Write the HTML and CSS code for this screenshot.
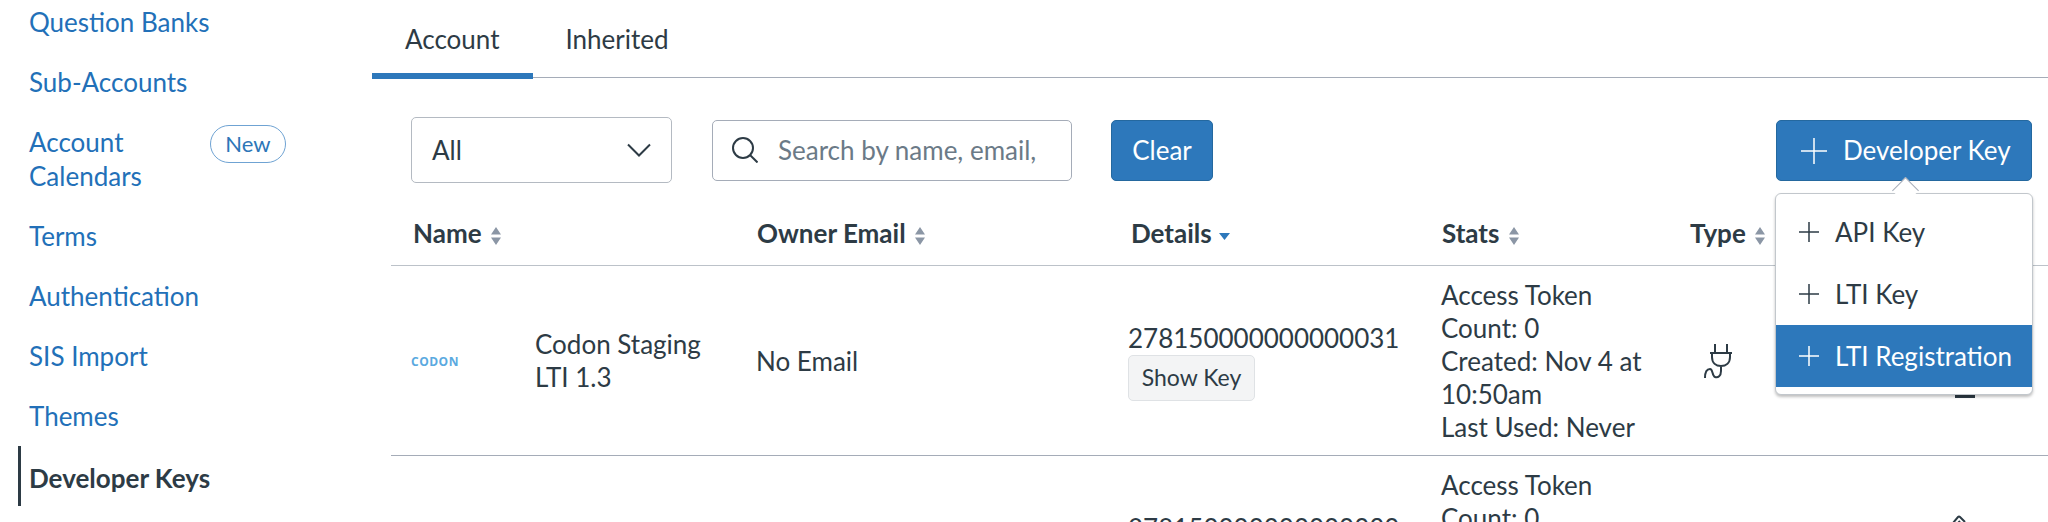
FILE: index.html
```html
<!DOCTYPE html>
<html lang="en">
<head>
    <meta charset="UTF-8">
    <title>Developer Keys</title>
    <link rel="stylesheet" href="styles.css">
</head>
<body>

    <aside class="sidebar">
        <ul class="nav">
            <li><a href="#">Question Banks</a></li>
            <li><a href="#">Sub-Accounts</a></li>
            <li class="nav-badged"><a href="#">Account<br>Calendars</a><span class="badge">New</span></li>
            <li><a href="#">Terms</a></li>
            <li><a href="#">Authentication</a></li>
            <li><a href="#">SIS Import</a></li>
            <li><a href="#">Themes</a></li>
            <li class="active"><a href="#">Developer Keys</a></li>
        </ul>
    </aside>

    <main class="content">
        <div class="tabs">
            <a class="tab tab-active" href="#">Account</a>
            <a class="tab" href="#">Inherited</a>
        </div>

        <div class="toolbar">
            <div class="select">
                <span>All</span>
                <svg class="chevron" viewBox="0 0 24 14"><path d="M1 1.500 12 12.500 23 1.500"/></svg>
            </div>
            <div class="search">
                <svg class="search-icon" viewBox="0 0 26 26"><circle cx="11" cy="11" r="10"/><path d="M18 18 25.500 25.500"/></svg>
                <span class="placeholder">Search by name, email,</span>
            </div>
            <button class="btn btn-clear">Clear</button>
            <div class="add-wrap">
                <button class="btn btn-add">
                    <svg class="plus plus-big" viewBox="0 0 26 26"><path d="M0 13H26M13 0V26"/></svg>
                    Developer Key
                </button>
                <div class="menu">
                    <a class="menu-item" href="#"><svg class="plus" viewBox="0 0 20 20"><path d="M0 10H20M10 0V20"/></svg>API Key</a>
                    <a class="menu-item" href="#"><svg class="plus" viewBox="0 0 20 20"><path d="M0 10H20M10 0V20"/></svg>LTI Key</a>
                    <a class="menu-item menu-item-on" href="#"><svg class="plus" viewBox="0 0 20 20"><path d="M0 10H20M10 0V20"/></svg>LTI Registration</a>
                </div>
            </div>
        </div>

        <table class="keys">
            <colgroup>
                <col class="col-name"><col class="col-email"><col class="col-details"><col class="col-stats"><col class="col-type"><col>
            </colgroup>
            <thead>
                <tr>
                    <th class="th-name">Name <svg class="sort" viewBox="0 0 10 18"><path d="M5 0 10 7.500H0ZM5 18 0 10.500H10Z"/></svg></th>
                    <th>Owner Email <svg class="sort" viewBox="0 0 10 18"><path d="M5 0 10 7.500H0ZM5 18 0 10.500H10Z"/></svg></th>
                    <th class="th-details">Details <svg class="sort-down" viewBox="0 0 11 7"><path d="M0 0H11L5.500 7Z"/></svg></th>
                    <th>Stats <svg class="sort" viewBox="0 0 10 18"><path d="M5 0 10 7.500H0ZM5 18 0 10.500H10Z"/></svg></th>
                    <th>Type <svg class="sort" viewBox="0 0 10 18"><path d="M5 0 10 7.500H0ZM5 18 0 10.500H10Z"/></svg></th>
                    <th></th>
                </tr>
            </thead>
            <tbody>
                <tr>
                    <td class="td-name"><span class="logo">CODON</span><span>Codon Staging<br>LTI 1.3</span></td>
                    <td>No Email</td>
                    <td class="td-details">278150000000000031<button class="show-key">Show Key</button></td>
                    <td>Access Token<br>Count: 0<br>Created: Nov 4 at<br>10:50am<br>Last Used: Never</td>
                    <td>
                        <svg class="plug" viewBox="0 0 30 36"><path d="M12 1V10M24 1V10M7 10H29M9 10V14C9 20 13 23 18 23C23 23 27 20 27 14V10M18 23V28C18 33 15 35 12 34C9 33 10 26 7 26C3 26 2 30 2 35"/></svg>
                    </td>
                    <td class="td-actions"><span class="action-peek"></span></td>
                </tr>
                <tr>
                    <td class="td-name"></td>
                    <td></td>
                    <td class="td-details">278150000000000030<button class="show-key">Show Key</button></td>
                    <td>Access Token<br>Count: 0<br>Created: Nov 4 at<br>10:50am<br>Last Used: Never</td>
                    <td></td>
                    <td class="td-actions"><svg class="edit" viewBox="0 0 20 20"><path d="M2 9 7 3Q8 2 9 3L14 8M7 9 9 7"/></svg></td>
                </tr>
            </tbody>
        </table>
    </main>

</body>
</html>
```

FILE: styles.css
```css
* {
    box-sizing: border-box;
}

html, body {
    height: 522px;
    overflow: hidden;
}

body {
    margin: 0;
    display: flex;
    background: #fff;
    color: #2d3b45;
    font-family: Lato, sans-serif;
    font-size: 26px;
    line-height: 33px;
}

a {
    color: inherit;
    text-decoration: none;
}

/* sidebar */
.sidebar {
    flex: 0 0 372px;
}

.nav {
    list-style: none;
    margin: -8px 0 0;
    padding: 0 0 0 18px;
    line-height: 34px;
}

.nav li {
    padding: 13px 0 13px 11px;
    color: #2270b8;
}

.nav-badged {
    display: flex;
    align-items: flex-start;
}

.badge {
    margin: 0 0 0 68px;
    width: 76px;
    height: 38px;
    border: 1px solid #6fa3d3;
    border-radius: 19px;
    text-align: center;
    font-size: 22px;
    line-height: 35px;
    color: #2d76b8;
}

.nav li.active {
    border-left: 3px solid #2d3b45;
    padding: 15px 0 11px 8px;
    color: #2d3b45;
    font-weight: 700;
}

/* tabs */
.content {
    flex: 1;
    min-width: 0;
}

.tabs {
    display: flex;
    height: 78px;
    border-bottom: 1px solid #a5acb8;
}

.tab {
    height: 79px;
    padding: 23px 33px 0;
}

.tab-active {
    border-bottom: 6px solid #2d78bb;
}

/* filters */
.toolbar {
    display: flex;
    align-items: center;
    height: 66px;
    margin: 39px 0 0 39px;
    position: relative;
}

.select {
    display: flex;
    align-items: center;
    justify-content: space-between;
    width: 261px;
    height: 66px;
    padding: 0 20px;
    border: 1px solid #b4bac2;
    border-radius: 5px;
}

.chevron {
    width: 24px;
    height: 14px;
}

.chevron path, .search-icon circle, .search-icon path {
    fill: none;
    stroke: #2d3b45;
    stroke-width: 2;
}

.search {
    display: flex;
    align-items: center;
    width: 360px;
    height: 61px;
    margin-left: 40px;
    padding-left: 19px;
    border: 1px solid #a5acb8;
    border-radius: 5px;
}

.search-icon {
    width: 26px;
    height: 26px;
    margin-right: 20px;
}

.placeholder {
    color: #6b7a87;
    white-space: nowrap;
}

.btn {
    height: 61px;
    border: 1px solid #24689f;
    border-radius: 5px;
    background: #2d78bb;
    color: #fff;
    font: inherit;
}

.btn-clear {
    width: 102px;
    margin-left: 39px;
    padding: 0;
}

.add-wrap {
    margin-left: auto;
    margin-right: 16px;
}

.btn-add {
    display: flex;
    align-items: center;
    width: 256px;
    padding: 1px 0 0 24px;
}

.plus {
    width: 20px;
    height: 20px;
    margin-right: 16px;
    flex: none;
}

.plus path {
    fill: none;
    stroke: currentColor;
    stroke-width: 1.500;
}

.plus-big {
    width: 26px;
    height: 26px;
    margin-right: 16px;
}

/* dropdown */
.menu {
    position: absolute;
    z-index: 2;
    top: 76px;
    right: 15px;
    width: 258px;
    height: 202px;
    padding-top: 7px;
    background: #fff;
    border: 1px solid #c2c7cc;
    border-radius: 6px;
    box-shadow: 0 2px 3px rgba(0, 0, 0, 0.25);
}

.menu::before {
    content: "";
    position: absolute;
    top: -13px;
    left: 120px;
    width: 18px;
    height: 18px;
    background: #fff;
    border-left: 1px solid #a5acb8;
    border-top: 1px solid #a5acb8;
    transform: rotate(45deg);
}

.menu-item {
    position: relative;
    display: flex;
    align-items: center;
    height: 62px;
    padding-left: 23px;
}

.menu-item-on {
    background: #2d78bb;
    color: #fff;
}

/* table */
.keys {
    width: 1676px;
    margin: 22px 0 0 19px;
    border-collapse: collapse;
    table-layout: fixed;
}

.col-name { width: 353px; }
.col-email { width: 371px; }
.col-details { width: 314px; }
.col-stats { width: 248px; }
.col-type { width: 230px; }

.keys th {
    height: 60px;
    padding: 0 0 3px 13px;
    text-align: left;
    font-weight: 700;
    white-space: nowrap;
    border-bottom: 1px solid #bcc2c9;
}

.keys .th-name {
    padding-left: 22px;
}

.keys .th-details {
    padding-left: 16px;
}

.keys td {
    height: 190px;
    padding: 13px 12px 11px;
    vertical-align: middle;
    border-bottom: 1px solid #a5acb8;
}

.keys .td-name {
    padding-left: 20px;
}

.td-name {
    white-space: nowrap;
}

.td-name span {
    display: inline-block;
    vertical-align: middle;
}

.logo {
    width: 124px;
    color: #5aa9e0;
    font-family: "Open Sans", sans-serif;
    font-size: 12px;
    font-weight: 700;
    letter-spacing: 0.5px;
}

.keys .td-details {
    padding-left: 13px;
    white-space: nowrap;
}

.show-key {
    display: block;
    width: 127px;
    height: 46px;
    padding: 0;
    border: 1px solid #dfe2e5;
    border-radius: 5px;
    background: #f3f4f5;
    color: #2d3b45;
    font: inherit;
    font-size: 23px;
}

.sort {
    width: 10px;
    height: 18px;
    margin-left: 3px;
    vertical-align: -2px;
    fill: #8b96a5;
}

.sort-down {
    width: 11px;
    height: 7px;
    margin-left: 1px;
    vertical-align: 3px;
    fill: #2d78bb;
}

.plug {
    display: block;
    width: 30px;
    height: 36px;
    margin-left: 14px;
}

.plug path {
    fill: none;
    stroke: #2d3b45;
    stroke-width: 2;
}

.td-actions {
    position: relative;
}

.action-peek {
    position: absolute;
    left: 48px;
    bottom: 57px;
    width: 20px;
    height: 3px;
    background: #2d3b45;
}

.edit {
    position: absolute;
    left: 44px;
    top: 58px;
    width: 20px;
    height: 20px;
    fill: none;
    stroke: #2d3b45;
    stroke-width: 2;
}
```
